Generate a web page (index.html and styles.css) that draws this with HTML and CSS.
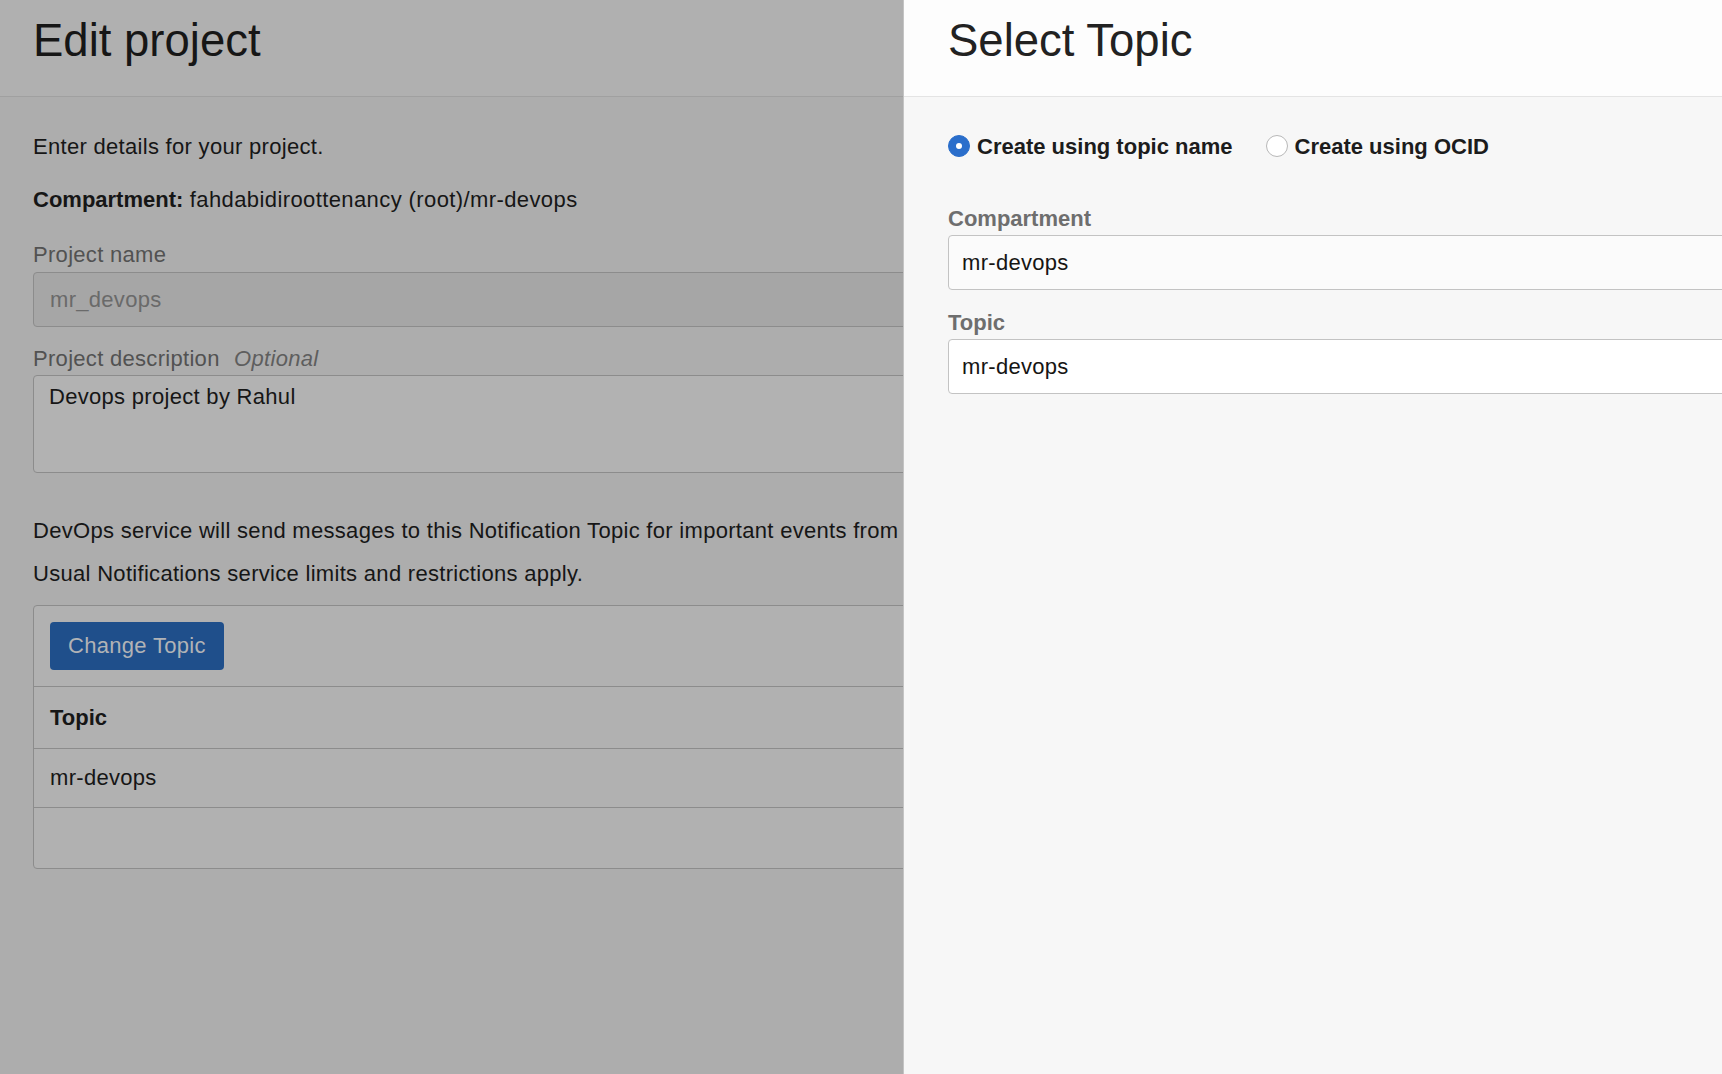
FILE: index.html
```html
<!DOCTYPE html>
<html lang="en">
<head>
<meta charset="utf-8">
<title>Edit project</title>
<link rel="stylesheet" href="styles.css">
</head>
<body>
<div class="page">
  <header class="page-head"><h1 class="title">Edit project</h1></header>
  <div class="page-body">
    <p class="line intro">Enter details for your project.</p>
    <p class="line compartment"><b>Compartment:</b> <span class="comp-path">fahdabidiroottenancy (root)/mr-devops</span></p>

    <div class="field first">
      <div class="label">Project name</div>
      <div class="input disabled">mr_devops</div>
    </div>
    <div class="field">
      <div class="label">Project description <i class="optional">Optional</i></div>
      <div class="textarea">Devops project by Rahul</div>
    </div>

    <p class="line notice">DevOps service will send messages to this Notification Topic for important events from your project, such as build and deployment status.</p>
    <p class="line usual">Usual Notifications service limits and restrictions apply.</p>

    <div class="topic-box">
      <div class="toolbar"><button class="btn">Change Topic</button></div>
      <div class="row head-row">Topic</div>
      <div class="row data-row">mr-devops</div>
      <div class="row empty-row"></div>
    </div>
  </div>
</div>

<aside class="panel">
  <header class="panel-head"><h1 class="title">Select Topic</h1></header>
  <div class="panel-body">
    <div class="radios">
      <label class="radio"><span class="dot checked"></span><span class="radio-text">Create using topic name</span></label>
      <label class="radio"><span class="dot"></span><span class="radio-text">Create using OCID</span></label>
    </div>
    <div class="pfield first">
      <div class="plabel">Compartment</div>
      <div class="pinput readonly">mr-devops</div>
    </div>
    <div class="pfield">
      <div class="plabel">Topic</div>
      <div class="pinput">mr-devops</div>
    </div>
  </div>
</aside>
</body>
</html>
```

FILE: styles.css
```css
* { box-sizing: border-box; }

html, body {
  margin: 0;
  padding: 0;
  height: 100%;
}

body {
  font-family: "Liberation Sans", Arial, Helvetica, sans-serif;
  font-size: 22px;
  line-height: 30px;
  letter-spacing: 0.3px;
  color: #161616;
  background: #adadad;
  overflow: hidden;
  position: relative;
  width: 1722px;
  height: 1074px;
}

b, .head-row, .radios, .plabel { letter-spacing: 0; }

.title {
  margin: 0;
  font-size: 45.5px;
  line-height: 44px;
  font-weight: 400;
  letter-spacing: 0;
}

/* ---------- left page (under overlay) ---------- */
.page {
  width: 1722px;
  height: 100%;
  background: #adadad;
}

.page-head {
  height: 97px;
  padding: 19px 33px 0;
  background: #b0b0b0;
  border-bottom: 1px solid #a0a0a0;
  color: #161616;
}

.page-body {
  padding: 35px 33px 0;
}

.line {
  margin: 0;
  white-space: nowrap;
}

.compartment { margin-top: 23px; }
.compartment b { font-weight: 700; }
.comp-path { letter-spacing: 0.4px; }

.field.first { margin-top: 25px; }
.field { margin-top: 17px; }

.label {
  color: #525252;
  line-height: 30px;
  margin-bottom: 2px;
}

.optional {
  color: #5e5e5e;
  margin-left: 8px;
}

.input {
  height: 55px;
  line-height: 53px;
  padding: 0 16px;
  border: 1px solid #8c8c8c;
  border-radius: 4px;
  background: #b2b2b2;
}

.input.disabled {
  background: #a6a6a6;
  color: #6a6a6a;
}

.textarea {
  height: 98px;
  padding: 6px 15px;
  border: 1px solid #8c8c8c;
  border-radius: 4px;
  background: #b2b2b2;
  margin-top: -1px;
}

.notice { margin-top: 43px; }
.usual { margin-top: 13px; }

.topic-box {
  margin-top: 16px;
  border: 1px solid #8c8c8c;
  border-radius: 4px;
  background: #b1b1b1;
}

.toolbar {
  padding: 16px 16px 16px;
  border-bottom: 1px solid #8c8c8c;
}

.btn {
  display: block;
  height: 48px;
  padding: 0 18px;
  border: none;
  border-radius: 4px;
  background: #1f4f8b;
  color: #b1b3b6;
  font-family: inherit;
  font-size: 22px;
  letter-spacing: 0.3px;
  line-height: 48px;
}

.row {
  padding: 0 16px;
}

.head-row {
  height: 62px;
  line-height: 61px;
  font-weight: 700;
  border-bottom: 1px solid #8c8c8c;
}

.data-row {
  height: 59px;
  line-height: 58px;
  border-bottom: 1px solid #8c8c8c;
}

.empty-row {
  height: 60px;
}

/* ---------- right panel (drawer over page) ---------- */
.panel {
  position: absolute;
  top: 0;
  left: 903px;
  right: 0;
  bottom: 0;
  background: #f7f7f7;
  overflow: hidden;
  border-left: 1px solid #c4c4c4;
}

.panel-head {
  height: 97px;
  padding: 19px 44px 0;
  background: #fdfdfd;
  border-bottom: 1px solid #e4e4e4;
  color: #222222;
}

.panel-body {
  padding: 35px 44px 0;
  width: 1400px;
}

.radios {
  display: flex;
  gap: 33px;
  font-weight: 700;
  color: #1c1c1c;
}

.radio {
  display: flex;
  align-items: center;
  gap: 7px;
}

.dot {
  width: 22px;
  height: 22px;
  border-radius: 50%;
  border: 1px solid #b8b8b8;
  background: #ffffff;
  position: relative;
  top: -1px;
}

.dot.checked {
  border-color: #2a6ecb;
  background: #2a6ecb;
}

.dot.checked::after {
  content: "";
  position: absolute;
  left: 7px;
  top: 7px;
  width: 6px;
  height: 6px;
  border-radius: 50%;
  background: #ffffff;
}

.pfield.first { margin-top: 42px; }
.pfield { margin-top: 18px; }

.plabel {
  color: #6e6e6e;
  font-weight: 700;
  line-height: 30px;
  margin-bottom: 1px;
}

.pinput {
  height: 55px;
  line-height: 53px;
  padding: 0 13px;
  border: 1px solid #c3c3c3;
  border-radius: 4px;
  background: #ffffff;
  color: #161513;
}

.pinput.readonly {
  background: #fbfbfb;
}
```
